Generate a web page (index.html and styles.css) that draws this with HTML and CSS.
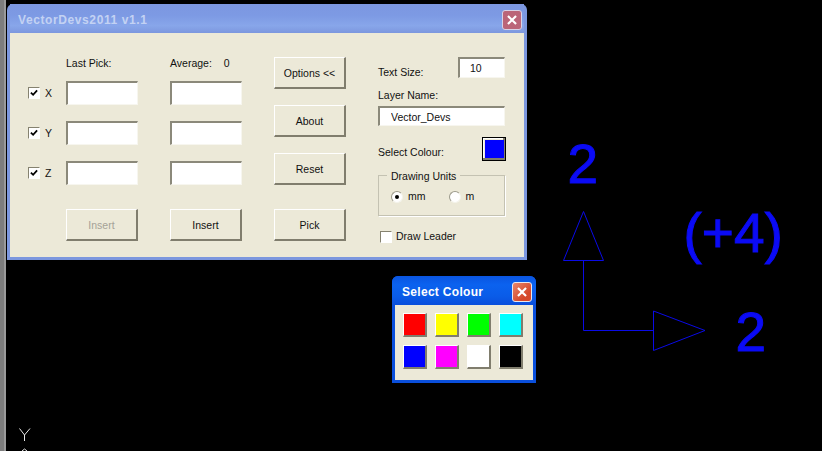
FILE: index.html
```html
<!DOCTYPE html>
<html lang="en">
<head>
<meta charset="utf-8">
<title>VectorDevs2011</title>
<link rel="stylesheet" href="styles.css">
</head>
<body>
<div class="strip"></div>

<svg class="cad" width="822" height="451" viewBox="0 0 822 451">
  <g class="lines">
    <path d="M583.5 211.5 L603.5 260.5 H563.5 Z"/>
    <path d="M583.5 261 V330.5 H653"/>
    <path d="M653.5 311 L705 330.5 L653.5 350.5 Z"/>
  </g>
  <text class="big" x="567.5" y="183">2</text>
  <text class="big" x="735.5" y="351">2</text>
  <text class="big" x="683.5" y="252">(+4)</text>
  <path class="ucs" d="M19.5 428.5 L24.5 435 L30 428.5 M24.5 435 V441 M24.5 449 L22 451 M24.5 449 L27 451"/>
</svg>

<section class="window main">
  <header class="titlebar">
    <span class="title">VectorDevs2011 v1.1</span>
    <span class="close">
      <svg width="20" height="20" viewBox="0 0 20 20"><path d="M5.5 5.5 L14.5 14.5 M14.5 5.5 L5.5 14.5"/></svg>
    </span>
  </header>
  <div class="client">
    <div class="col-values">
      <div class="row heads">
        <span class="gutter"></span>
        <span class="field">Last Pick:</span>
        <span class="field">Average:<i class="avg">0</i></span>
      </div>
      <div class="row">
        <label class="gutter"><span class="check"><svg width="9" height="9" viewBox="0 0 9 9"><path d="M1 4 L3.5 6.5 L8 1.5"/></svg></span>X</label>
        <input class="edit field" type="text">
        <input class="edit field" type="text">
      </div>
      <div class="row">
        <label class="gutter"><span class="check"><svg width="9" height="9" viewBox="0 0 9 9"><path d="M1 4 L3.5 6.5 L8 1.5"/></svg></span>Y</label>
        <input class="edit field" type="text">
        <input class="edit field" type="text">
      </div>
      <div class="row">
        <label class="gutter"><span class="check"><svg width="9" height="9" viewBox="0 0 9 9"><path d="M1 4 L3.5 6.5 L8 1.5"/></svg></span>Z</label>
        <input class="edit field" type="text">
        <input class="edit field" type="text">
      </div>
      <div class="row actions">
        <span class="gutter"></span>
        <button class="btn field disabled">Insert</button>
        <button class="btn field">Insert</button>
      </div>
    </div>
    <div class="col-buttons">
      <button class="btn">Options &lt;&lt;</button>
      <button class="btn">About</button>
      <button class="btn">Reset</button>
      <button class="btn pick">Pick</button>
    </div>
    <div class="col-options">
      <div class="size-row">
        <span class="size-label">Text Size:</span>
        <input class="edit size" type="text" value="10">
      </div>
      <div class="layer-label">Layer Name:</div>
      <input class="edit layer" type="text" value="Vector_Devs">
      <div class="colour-row">
        <span class="colour-label">Select Colour:</span>
        <span class="colour-btn"><span class="colour-fill"></span></span>
      </div>
      <div class="units">
        <span class="legend">Drawing Units</span>
        <label class="radio-item"><span class="radio on"></span>mm</label>
        <label class="radio-item"><span class="radio"></span>m</label>
      </div>
      <label class="leader"><span class="check"></span>Draw Leader</label>
    </div>
  </div>
</section>

<section class="window picker">
  <header class="titlebar">
    <span class="title">Select Colour</span>
    <span class="close">
      <svg width="20" height="20" viewBox="0 0 20 20"><path d="M5.5 5.5 L14.5 14.5 M14.5 5.5 L5.5 14.5"/></svg>
    </span>
  </header>
  <div class="swatches">
    <span class="swatch red"></span>
    <span class="swatch yellow"></span>
    <span class="swatch green"></span>
    <span class="swatch cyan"></span>
    <span class="swatch blue"></span>
    <span class="swatch magenta"></span>
    <span class="swatch white"></span>
    <span class="swatch black"></span>
  </div>
</section>
</body>
</html>
```
FILE: styles.css
```css
* { box-sizing: border-box; }
html, body { margin: 0; padding: 0; }
body {
  width: 822px;
  height: 451px;
  background: #000;
  overflow: hidden;
  position: relative;
  font: 10.5px/13px "Liberation Sans", Arial, sans-serif;
  color: #111;
}
.strip { position: absolute; left: 0; top: 0; bottom: 0; width: 6px; background: #7d7d7d; border-right: 2px solid #9a9a9a; }
.cad { position: absolute; left: 0; top: 0; }
.lines path { fill: none; stroke: #0a0ae6; stroke-width: 1; }
.big { font: 55px "Liberation Sans", Arial, sans-serif; fill: #0b0bf5; stroke: #0b0bf5; stroke-width: 1; }
.ucs { fill: none; stroke: #e8e8e8; stroke-width: 1; }

.window { position: absolute; display: flex; flex-direction: column; border-radius: 6px 6px 0 0; }
.main { left: 7px; top: 4px; width: 520px; height: 256px; background: #7c97de; padding: 0 3px 3px; }
.picker { left: 392px; top: 276px; width: 144px; height: 107px; background: #0a4fdc; padding: 0 3px 3px; }

.titlebar { display: flex; align-items: center; justify-content: space-between; flex: none; }
.main .titlebar { height: 29px; padding: 3px 2px 0 8px; background: linear-gradient(#7c97e0, #7d9ae4 40%, #88a6ea 75%, #7c97de); }
.picker .titlebar { height: 29px; margin: 0 -3px; padding: 2px 4px 0 10px; background: linear-gradient(#0a55e0, #0b62ef 30%, #0a5ce8 70%, #0a4fdc); border-radius: 6px 6px 0 0; }
.title { font: bold 12px/14px "Liberation Sans", Arial, sans-serif; }
.main .title { color: #c3d2f3; letter-spacing: 0.6px; }
.picker .title { color: #fff; letter-spacing: 0.3px; }
.close { width: 20px; height: 20px; border: 1px solid #e8e8ee; border-radius: 3px; display: flex; align-items: center; justify-content: center; }
.close svg { display: block; width: 18px; height: 18px; }
.close path { fill: none; stroke: #fff; stroke-width: 2.4; }
.main .close { background: #bb6578; border-color: #d8d3e6; }
.picker .close { background: linear-gradient(135deg, #e8866a, #d5482a 70%); }

.client { flex: 1; background: #ece9d8; display: flex; padding: 24px 0 0 18px; }

.col-values { width: 246px; display: flex; flex-direction: column; }
.row { display: flex; height: 24px; margin-bottom: 16px; align-items: center; }
.heads { margin-bottom: 0; align-items: flex-start; }
.actions { height: 32px; margin: 8px 0 0; }
.gutter { width: 38px; display: flex; align-items: center; flex: none; }
.row .field { width: 72px; flex: none; margin-right: 32px; }
.row .field:last-child { margin-right: 0; }
.avg { font-style: normal; margin-left: 12px; }
.check {
  width: 12px; height: 12px; margin-right: 5px; flex: none;
  background: #fff;
  border: 1px solid; border-color: #85826f #fff #fff #85826f;
  display: flex; align-items: center; justify-content: center;
}
.check path { fill: none; stroke: #000; stroke-width: 2; }
.check svg { display: block; width: 8px; height: 8px; }

.edit {
  height: 24px; margin: 0; padding: 0 11px; background: #fff; outline: none;
  border: 2px solid; border-color: #8b897a #f7f6ef #f7f6ef #8b897a;
  border-width: 2px 1px 1px 2px;
  font: 10.5px "Liberation Sans", Arial, sans-serif; color: #111;
}
.btn {
  height: 32px; padding: 0; background: #ece9d8;
  border: 2px solid; border-color: #fff #807d6d #807d6d #fff;
  border-width: 1px 2px 2px 1px;
  font: 10.5px "Liberation Sans", Arial, sans-serif; color: #111;
}
.disabled { color: #a5a297; }

.col-buttons { width: 72px; display: flex; flex-direction: column; gap: 16px; }
.pick { margin-top: 8px; }

.col-options { width: 128px; margin-left: 32px; display: flex; flex-direction: column; }
.size-row { display: flex; align-items: flex-start; justify-content: space-between; height: 21px; }
.size-label { margin-top: 9px; }
.size { width: 47px; height: 21px; padding-left: 10px; margin-right: 1px; }
.layer-label { margin-top: 11px; height: 17px; }
.layer { width: 127px; height: 20px; }
.colour-row { display: flex; align-items: center; justify-content: space-between; margin-top: 11px; height: 24px; }
.colour-label { margin-top: 6px; }
.colour-btn { width: 24px; height: 24px; border: 1px solid #000; background: #ece9d8; padding: 2px 2px 3px 2px; display: block; box-shadow: inset -2px -2px 0 #807d6d, inset 1px 1px 0 #fff; }
.colour-fill { display: block; width: 19px; height: 18px; background: #0000ff; }

.units {
  position: relative;
  margin-top: 14px; padding: 14px 0 0 12px; width: 127px; height: 41px;
  border: 1px solid #c4c2b2; box-shadow: 1px 1px 0 #fff;
  display: flex; align-items: flex-start; gap: 23px;
}
.legend { position: absolute; left: 8px; top: -6px; padding: 0 4px; background: #ece9d8; }
.radio-item { display: flex; align-items: center; }
.radio { width: 12px; height: 12px; border-radius: 50%; margin-right: 5px; background: #fff; border: 1px solid #9c9a8b; border-right-color: #f4f3ea; border-bottom-color: #f4f3ea; display: flex; align-items: center; justify-content: center; }
.radio.on::after { content: ""; width: 4px; height: 4px; background: #000; border-radius: 50%; }

.leader { display: flex; align-items: center; margin-top: 14px; padding-left: 2px; }
.leader .check { margin-right: 4px; }

.swatches {
  flex: 1; background: #ece9d8;
  display: grid; grid-template-columns: repeat(4, 24px); grid-auto-rows: 24px; gap: 8px;
  padding: 8px 0 0 8px;
}
.swatch {
  display: block;
  border: 1px solid; border-color: #fff #807d6d #807d6d #fff;
  border-width: 1px 2px 2px 1px;
}
.red { background: #f00; }
.yellow { background: #ff0; }
.green { background: #0f0; }
.cyan { background: #0ff; }
.blue { background: #00f; }
.magenta { background: #f0f; }
.white { background: #fff; }
.black { background: #000; }
```
